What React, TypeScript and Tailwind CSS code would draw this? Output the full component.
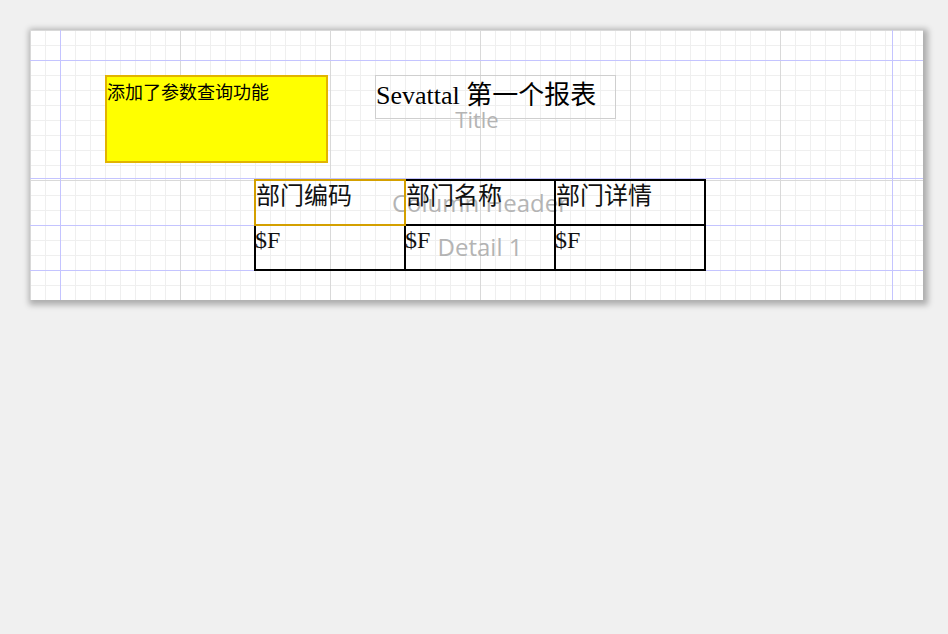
import React from 'react';

const serif = { fontFamily: '"Liberation Serif", "Noto Sans CJK SC", serif' };

// guide lines of the report bands (page coordinates)
const hGuides = [30, 148, 195, 240];
const vGuides = [30, 862];

const columns = ['部门编码', '部门名称', '部门详情'];

const App: React.FC = () => {
  return (
    <div className="h-[634px] w-[948px] overflow-hidden bg-[#f0f0f0] pl-[30px] pt-[30px]">
      <div className="relative h-[270px] w-[893px] bg-white bg-[linear-gradient(to_right,#d9d9d9_1px,transparent_1px),linear-gradient(to_bottom,#d9d9d9_1px,transparent_1px),linear-gradient(to_right,#efefef_1px,transparent_1px),linear-gradient(to_bottom,#efefef_1px,transparent_1px)] bg-[size:150px_150px,150px_150px,15px_15px,15px_15px] shadow-[2px_2px_6px_3px_rgba(0,0,0,0.28)]">
        {hGuides.map((y) => (
          <div key={y} className="absolute left-0 right-0 h-px bg-[#c4c4ff]" style={{ top: y }} />
        ))}
        {vGuides.map((x) => (
          <div key={x} className="absolute bottom-0 top-0 w-px bg-[#c4c4ff]" style={{ left: x }} />
        ))}

        {/* static text */}
        <div className="absolute left-[75px] top-[45px] h-[88px] w-[223px] border-2 border-[#e2b400] bg-[#ffff00] pt-[3px] font-['Noto_Sans_CJK_SC',sans-serif] text-[18px] leading-[22px] text-black">
          添加了参数查询功能
        </div>

        {/* title */}
        <div className="absolute left-[345px] top-[45px] h-[44px] w-[241px] border border-[#cfcfcf]">
          <div className="absolute left-[101px] top-[30px] -translate-x-1/2 font-['Open_Sans',sans-serif] text-[22px] leading-[26px] text-[#b4b4b4]">
            Title
          </div>
          <div className="relative pt-[3px] text-[26px] leading-[34px] text-black" style={serif}>
            Sevattal 第一个报表
          </div>
        </div>

        {/* table */}
        <div className="absolute left-[225px] top-[150px] w-[450px]">
          <div className="pointer-events-none absolute left-0 right-0 top-[8px] text-center font-['Open_Sans',sans-serif] text-[24px] leading-[30px] text-[#b4b4b4]">
            Column Header
          </div>
          <div className="pointer-events-none absolute left-0 right-0 top-[52px] text-center font-['Open_Sans',sans-serif] text-[24px] leading-[30px] text-[#b4b4b4]">
            Detail 1
          </div>
          <div className="relative grid grid-cols-3 grid-rows-[45px_45px]">
            {columns.map((c, i) => (
              <div
                key={c}
                className={
                  i === 0
                    ? 'relative z-10 pl-px text-[24px] leading-[32px] text-[#111] outline-2 -outline-offset-1 outline-[#d4a000]'
                    : 'pl-px text-[24px] leading-[32px] text-[#111] outline-2 -outline-offset-1 outline-black'
                }
                style={serif}
              >
                {c}
              </div>
            ))}
            {columns.map((c) => (
              <div
                key={c + 'f'}
                className="text-[24px] leading-[30px] text-[#111] outline-2 -outline-offset-1 outline-black"
                style={serif}
              >
                $F
              </div>
            ))}
          </div>
        </div>
      </div>
    </div>
  );
};

export default App;
